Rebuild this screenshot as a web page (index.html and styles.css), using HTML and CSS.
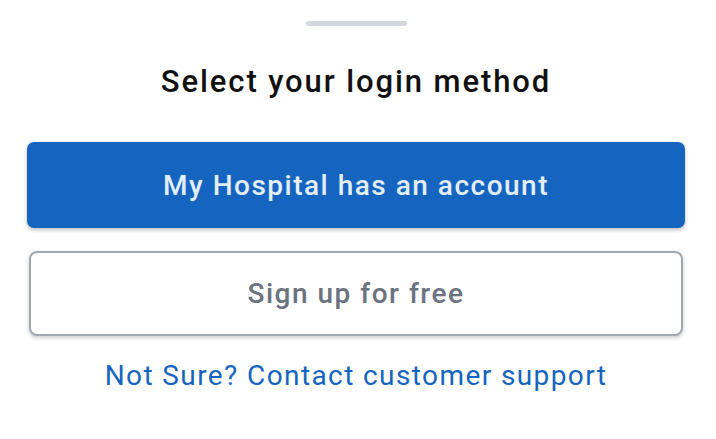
FILE: index.html
```html
<!DOCTYPE html>
<html>
<head>
<meta charset="utf-8">
<link rel="stylesheet" href="styles.css">
</head>
<body>
<div class="sheet">
  <div class="handle"></div>
  <h1 class="title">Select your login method</h1>
  <div class="actions">
    <button class="btn btn-primary">My Hospital has an account</button>
    <button class="btn btn-outline">Sign up for free</button>
  </div>
  <a class="support" href="#">Not Sure? Contact customer support</a>
</div>
</body>
</html>
```
FILE: styles.css
```css
* { box-sizing: border-box; }
html, body { margin: 0; padding: 0; background: #fff; }
body { font-family: Roboto, "Noto Sans", sans-serif; }
.sheet {
  width: 716px;
  height: 439px;
  padding: 21px 31px 0 27px;
  display: flex;
  flex-direction: column;
  align-items: center;
}
.handle {
  width: 101px;
  height: 5px;
  border-radius: 3px;
  background: #d5d8de;
}
.title {
  margin: 38px 0 0;
  font-size: 31px;
  font-weight: 500;
  line-height: 36px;
  letter-spacing: 1.9px;
  color: #111;
}
.actions {
  margin-top: 42px;
  width: 100%;
  display: flex;
  flex-direction: column;
  gap: 23px;
}
.btn {
  font-family: inherit;
  font-size: 28px;
  font-weight: 500;
  letter-spacing: 1.5px;
  height: 86px;
  border-radius: 7px;
  cursor: pointer;
}
.btn-primary {
  width: 100%;
  background: #1565c0;
  color: #e3eefb;
  border: none;
  box-shadow: 0 2px 4px rgba(0,0,0,0.25);
}
.btn-outline {
  margin: 0 2px;
  height: 85px;
  background: #fff;
  color: #6b7280;
  border: 2px solid #a3a8b0;
  border-radius: 8px;
  box-shadow: 0 2px 4px rgba(0,0,0,0.2);
}
.support {
  margin-top: 23px;
  font-size: 28px;
  line-height: 34px;
  letter-spacing: 1.4px;
  color: #1565c0;
  text-decoration: none;
}
```
